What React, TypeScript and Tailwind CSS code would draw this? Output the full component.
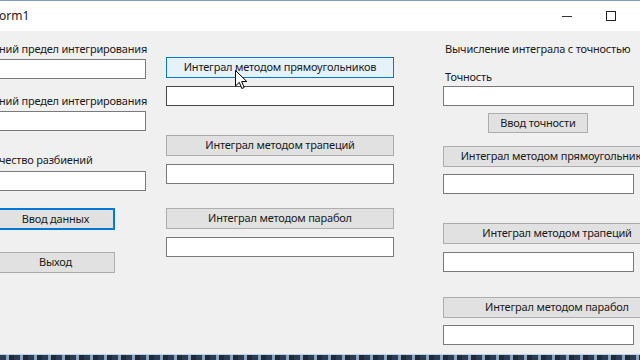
import React from 'react';

const font = { fontFamily: '"Noto Sans", "Open Sans", sans-serif' };

type BtnKind = 'normal' | 'hover' | 'default';

function Btn({ children, className = '', kind = 'normal' }: { children: React.ReactNode; className?: string; kind?: BtnKind }) {
  const skin =
    kind === 'hover'
      ? 'bg-[#e5f1fb] border border-[#0078d7]'
      : kind === 'default'
        ? 'bg-[#e1e1e1] border-2 border-[#0078d7]'
        : 'bg-[#e1e1e1] border border-[#adadad]';
  return (
    <div
      className={`flex items-center justify-center text-[11px] tracking-[-0.2px] text-[#1a1a1a] whitespace-nowrap overflow-hidden ${skin} ${className}`}
    >
      {children}
    </div>
  );
}

function Field({ className = '', dark = false }: { className?: string; dark?: boolean }) {
  return <div className={`h-[20px] bg-white border ${dark ? 'border-[#4a4a4a]' : 'border-[#7a7a7a]'} ${className}`} />;
}

function Label({ children, className = '' }: { children: React.ReactNode; className?: string }) {
  return (
    <div className={`h-[16px] leading-[16px] text-[11px] tracking-[-0.2px] text-[#1a1a1a] whitespace-nowrap ${className}`}>
      {children}
    </div>
  );
}

export default function App() {
  return (
    <div className="relative w-[640px] h-[360px] overflow-hidden bg-[#f0f0f0] flex flex-col" style={font}>
      {/* title bar */}
      <div className="h-[31px] shrink-0 bg-white border-t border-[#7f9cc0] flex items-center">
        <span className="ml-[-1px] text-[12px] text-[#1a1a1a]">orm1</span>
        <div className="ml-auto mr-[24px] flex items-center gap-[34px]">
          <div className="w-[10px] h-px bg-[#333]" />
          <div className="w-[10px] h-[10px] border border-[#222]" />
        </div>
      </div>

      {/* form body */}
      <div className="flex-1 flex">
        {/* left column */}
        <div className="ml-[-4px] w-[150px] shrink-0 flex flex-col">
          <Label className="mt-[10px] pl-[3px]">ний предел интегрирования</Label>
          <Field className="mt-[2px]" />
          <Label className="mt-[14px] pl-[3px]">ний предел интегрирования</Label>
          <Field className="mt-[2px]" />
          <Label className="mt-[21px] pl-[3px]">чество разбиений</Label>
          <Field className="mt-[3px]" />
          <Btn kind="default" className="mt-[17px] w-[119px] h-[22px]">Ввод данных</Btn>
          <Btn className="mt-[22px] w-[119px] h-[21px]">Выход</Btn>
        </div>

        {/* middle column */}
        <div className="ml-[20px] w-[228px] shrink-0 flex flex-col">
          <Btn kind="hover" className="mt-[26px] h-[21px]">Интеграл методом прямоугольников</Btn>
          <Field dark className="mt-[8px]" />
          <Btn className="mt-[29px] h-[21px]">Интеграл методом трапеций</Btn>
          <Field className="mt-[8px]" />
          <Btn className="mt-[24px] h-[21px]">Интеграл методом парабол</Btn>
          <Field className="mt-[8px]" />
        </div>

        {/* right column */}
        <div className="ml-[49px] w-[228px] shrink-0 flex flex-col">
          <Label className="mt-[10px] pl-[2px]">Вычисление интеграла с точностью</Label>
          <Label className="mt-[12px] pl-[2px]">Точность</Label>
          <Field className="mt-px w-[191px]" />
          <Btn className="mt-[7px] ml-[45px] w-[100px] h-[20px]">Ввод точности</Btn>
          <Btn className="mt-[13px] h-[21px]">Интеграл методом прямоугольников</Btn>
          <Field className="mt-[7px] w-[191px]" />
          <Btn className="mt-[29px] h-[21px]">Интеграл методом трапеций</Btn>
          <Field className="mt-[8px] w-[191px]" />
          <Btn className="mt-[25px] h-[21px]">Интеграл методом парабол</Btn>
          <Field className="mt-[7px] w-[191px]" />
        </div>
      </div>

      {/* taskbar glimpse */}
      <div className="h-[6px] shrink-0 border-t border-[#b9d1ea] bg-[repeating-linear-gradient(90deg,#2b3c52_0px,#2b3c52_6px,#8aa4bf_6px,#8aa4bf_9px,#1d2a3a_9px,#1d2a3a_14px)]" />

      {/* mouse cursor */}
      <svg className="absolute left-[235px] top-[70px]" width="13" height="20" viewBox="0 0 13 20">
        <path d="M0.5 0.5 L0.5 16 L4.3 12.3 L6.8 18.5 L9.2 17.5 L6.7 11.5 L11.8 11.5 Z" fill="#fff" stroke="#000" strokeWidth="1" strokeLinejoin="round" />
      </svg>
    </div>
  );
}
